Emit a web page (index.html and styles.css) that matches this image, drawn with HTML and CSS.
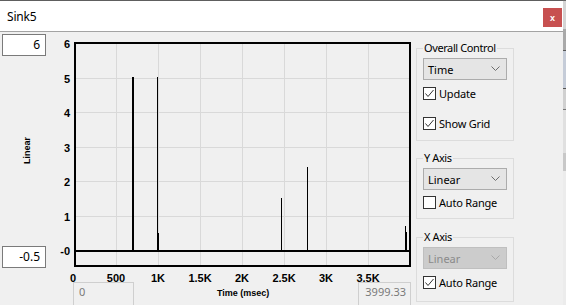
FILE: index.html
```html
<!DOCTYPE html>
<html lang="en">
<head>
    <meta charset="UTF-8">
    <title>Sink5</title>
    <link rel="stylesheet" href="styles.css">
</head>
<body>
<div class="screen">
    <div class="window">
        <div class="titlebar">
            <span class="title">Sink5</span>
            <span class="close">x</span>
        </div>

        <div class="body">
            <!-- plot with its range boxes -->
            <div class="main">
                <div class="plot-row">
                    <div class="yside">
                        <div class="field">6</div>
                        <div class="ylabel"><span>Linear</span></div>
                        <div class="field">-0.5</div>
                    </div>

                    <svg class="chart" width="366" height="250" viewBox="0 0 366 250">
                        <g stroke="#d9d9d9" stroke-width="1">
                            <line x1="68.5" y1="12" x2="68.5" y2="234"/>
                            <line x1="110.5" y1="12" x2="110.5" y2="234"/>
                            <line x1="152.5" y1="12" x2="152.5" y2="234"/>
                            <line x1="194.5" y1="12" x2="194.5" y2="234"/>
                            <line x1="236.5" y1="12" x2="236.5" y2="234"/>
                            <line x1="278.5" y1="12" x2="278.5" y2="234"/>
                            <line x1="320.5" y1="12" x2="320.5" y2="234"/>
                            <line x1="28" y1="46.5" x2="361" y2="46.5"/>
                            <line x1="28" y1="80.5" x2="361" y2="80.5"/>
                            <line x1="28" y1="115.5" x2="361" y2="115.5"/>
                            <line x1="28" y1="149.5" x2="361" y2="149.5"/>
                            <line x1="28" y1="184.5" x2="361" y2="184.5"/>
                        </g>

                        <!-- zero line and samples -->
                        <g fill="#000">
                            <rect x="28" y="218" width="333" height="2"/>
                            <rect x="84" y="45" width="2" height="173"/>
                            <rect x="109" y="45" width="1" height="173"/>
                            <rect x="109" y="201" width="2" height="17"/>
                            <rect x="233" y="166" width="1" height="52"/>
                            <rect x="259" y="135" width="1" height="83"/>
                            <rect x="357" y="194" width="1" height="24"/>
                            <rect x="358" y="200" width="1" height="18"/>
                        </g>

                        <rect x="27" y="11" width="335" height="223" fill="none" stroke="#000" stroke-width="2"/>

                        <g class="ticks" text-anchor="end">
                            <text x="22" y="16">6</text>
                            <text x="22" y="50.5">5</text>
                            <text x="22" y="84.5">4</text>
                            <text x="22" y="119.5">3</text>
                            <text x="22" y="153.5">2</text>
                            <text x="22" y="188.5">1</text>
                            <text x="22" y="222.5">-0</text>
                        </g>
                        <g class="ticks" text-anchor="middle">
                            <text x="25" y="249.5">0</text>
                            <text x="68" y="249.5">500</text>
                            <text x="110" y="249.5">1K</text>
                            <text x="152" y="249.5">1.5K</text>
                            <text x="194" y="249.5">2K</text>
                            <text x="236" y="249.5">2.5K</text>
                            <text x="278" y="249.5">3K</text>
                            <text x="320" y="249.5">3.5K</text>
                        </g>
                    </svg>
                </div>

                <div class="xrow">
                    <div class="field field-off field-min">0</div>
                    <span class="xlabel">Time (msec)</span>
                    <div class="field field-off field-max">3999.33</div>
                </div>
            </div>

            <!-- controls -->
            <div class="panel">
                <fieldset class="group group-overall">
                    <legend>Overall Control</legend>
                    <div class="dropdown">
                        <span>Time</span>
                        <svg width="9" height="6" viewBox="0 0 9 6"><polyline points="0.5,0.5 4.5,4.5 8.5,0.5" fill="none" stroke="#6d6d6d" stroke-width="1"/></svg>
                    </div>
                    <label class="check check-update">
                        <svg class="box" width="13" height="13" viewBox="0 0 13 13"><rect x="0.5" y="0.5" width="12" height="12" fill="#fff" stroke="#333"/><polyline points="2.5,6.5 5,9.5 10.5,3" fill="none" stroke="#333" stroke-width="1"/></svg>
                        Update
                    </label>
                    <label class="check check-grid">
                        <svg class="box" width="13" height="13" viewBox="0 0 13 13"><rect x="0.5" y="0.5" width="12" height="12" fill="#fff" stroke="#333"/><polyline points="2.5,6.5 5,9.5 10.5,3" fill="none" stroke="#333" stroke-width="1"/></svg>
                        Show Grid
                    </label>
                </fieldset>

                <fieldset class="group group-y">
                    <legend>Y Axis</legend>
                    <div class="dropdown">
                        <span>Linear</span>
                        <svg width="9" height="6" viewBox="0 0 9 6"><polyline points="0.5,0.5 4.5,4.5 8.5,0.5" fill="none" stroke="#6d6d6d" stroke-width="1"/></svg>
                    </div>
                    <label class="check check-auto">
                        <svg class="box" width="13" height="13" viewBox="0 0 13 13"><rect x="0.5" y="0.5" width="12" height="12" fill="#fff" stroke="#333"/></svg>
                        Auto Range
                    </label>
                </fieldset>

                <fieldset class="group group-x">
                    <legend>X Axis</legend>
                    <div class="dropdown dropdown-off">
                        <span>Linear</span>
                        <svg width="9" height="6" viewBox="0 0 9 6"><polyline points="0.5,0.5 4.5,4.5 8.5,0.5" fill="none" stroke="#a8a8a8" stroke-width="1"/></svg>
                    </div>
                    <label class="check check-auto-x">
                        <svg class="box" width="13" height="13" viewBox="0 0 13 13"><rect x="0.5" y="0.5" width="12" height="12" fill="#fff" stroke="#333"/><polyline points="2.5,6.5 5,9.5 10.5,3" fill="none" stroke="#333" stroke-width="1"/></svg>
                        Auto Range
                    </label>
                </fieldset>
            </div>
        </div>
    </div>

    <!-- edge of the window behind -->
    <div class="peek">
        <div class="peek-a"></div>
        <div class="peek-b"></div>
        <div class="peek-c"></div>
        <div class="peek-d"></div>
        <div class="peek-e"></div>
        <div class="peek-f"></div>
    </div>
</div>
</body>
</html>
```

FILE: styles.css
```css
body {
    margin: 0;
    background-color: #f0f0f0;
    font-family: "Noto Sans", sans-serif;
    color: #000;
    overflow: hidden;
}

.screen {
    display: flex;
    width: 566px;
    height: 305px;
}

.window {
    width: 563px;
    display: flex;
    flex-direction: column;
}

/* Title bar */
.titlebar {
    height: 30px;
    background-color: #fff;
    border-top: 1px solid #5e5e5e;
    border-bottom: 1px solid #a3a3a3;
    display: flex;
    justify-content: space-between;
    align-items: center;
    padding-left: 7px;
}

.title {
    font-size: 12px;
    letter-spacing: -0.2px;
}

.close {
    align-self: flex-start;
    margin-top: 7px;
    margin-right: 1px;
    width: 19px;
    height: 19px;
    background-color: #c75050;
    color: #fff;
    font: bold 9px "Liberation Sans", sans-serif;
    display: flex;
    justify-content: center;
    align-items: center;
}

.body {
    display: flex;
    flex: 1;
}

/* Plot side */
.main {
    width: 414px;
    display: flex;
    flex-direction: column;
}

.plot-row {
    display: flex;
    height: 250px;
}

.yside {
    width: 48px;
    box-sizing: border-box;
    padding: 2px 0 14px 2px;
    display: flex;
    flex-direction: column;
}

.field {
    width: 44px;
    height: 22px;
    box-sizing: border-box;
    border: 1px solid #7a7a7a;
    background-color: #fff;
    font-size: 12px;
    line-height: 20px;
    text-align: right;
    padding-right: 5px;
}

.ylabel {
    flex: 1;
    display: flex;
    justify-content: center;
    align-items: center;
    padding-left: 3px;
}

.ylabel span {
    writing-mode: vertical-rl;
    transform: rotate(180deg);
    font: bold 9px "Liberation Sans", sans-serif;
}

.chart {
    display: block;
    overflow: visible;
}

.ticks {
    font: bold 11px "Liberation Sans", sans-serif;
    fill: #000;
}

.xrow {
    display: flex;
    padding-left: 73px;
    height: 23px;
}

.field-off {
    background-color: #f0f0f0;
    border-color: #cfcfcf;
    color: #7a7a7a;
    font-size: 11px;
    height: 24px;
    line-height: 18px;
}

.field-min {
    width: 61px;
    text-align: left;
    padding-left: 5px;
}

.xlabel {
    margin-left: 83px;
    margin-top: 6px;
    font: bold 9px "Liberation Sans", sans-serif;
    line-height: 11px;
}

.field-max {
    width: 53px;
    margin-left: auto;
    margin-right: 3px;
    padding-right: 4px;
}

/* Control panel */
.panel {
    padding-left: 2px;
}

.group {
    width: 98px;
    box-sizing: border-box;
    margin: 0;
    border: 1px solid #dcdcdc;
    padding: 3px 6px 9px;
}

.group legend {
    padding: 0 1px;
    font-size: 11px;
    line-height: 14px;
    letter-spacing: -0.4px;
}

.group-overall {
    margin-top: 9px;
    padding-bottom: 10px;
}

.group-y {
    margin-top: 10px;
}

.group-x {
    margin-top: 11px;
    padding-bottom: 12px;
}

.dropdown {
    height: 22px;
    box-sizing: border-box;
    border: 1px solid #acacac;
    background-color: #e5e5e5;
    font-size: 11px;
    display: flex;
    justify-content: space-between;
    align-items: center;
    padding: 0 6px 0 4px;
}

.dropdown svg {
    display: block;
}

.dropdown-off {
    background-color: #cccccc;
    border-color: #bfbfbf;
    color: #8a8a8a;
}

.check {
    display: flex;
    align-items: center;
    gap: 3px;
    height: 13px;
    font-size: 11px;
    letter-spacing: -0.2px;
}

.check .box {
    display: block;
    flex-shrink: 0;
}

.check-update {
    margin-top: 7px;
}

.check-grid {
    margin-top: 17px;
}

.check-auto {
    margin-top: 6px;
}

.check-auto-x {
    margin-top: 7px;
}

/* Sliver of another window on the right */
.peek {
    flex: 1;
    display: flex;
    flex-direction: column;
    background-color: #ececec;
}

.peek-a {
    height: 28px;
    background-color: #d4d4d4;
    border-top: 1px solid #666;
}

.peek-b {
    height: 21px;
    background-color: #a9a9a9;
    border-bottom: 1px solid #555;
}

.peek-c {
    height: 37px;
    background-color: #c5ccd8;
    border-bottom: 1px solid #555;
}

.peek-d {
    height: 20px;
    background-color: #d0d0d0;
    border-bottom: 1px solid #777;
}

.peek-e {
    height: 43px;
    background-color: #e0e0e0;
}

.peek-f {
    height: 18px;
    background-color: #c8c8c8;
}
```
